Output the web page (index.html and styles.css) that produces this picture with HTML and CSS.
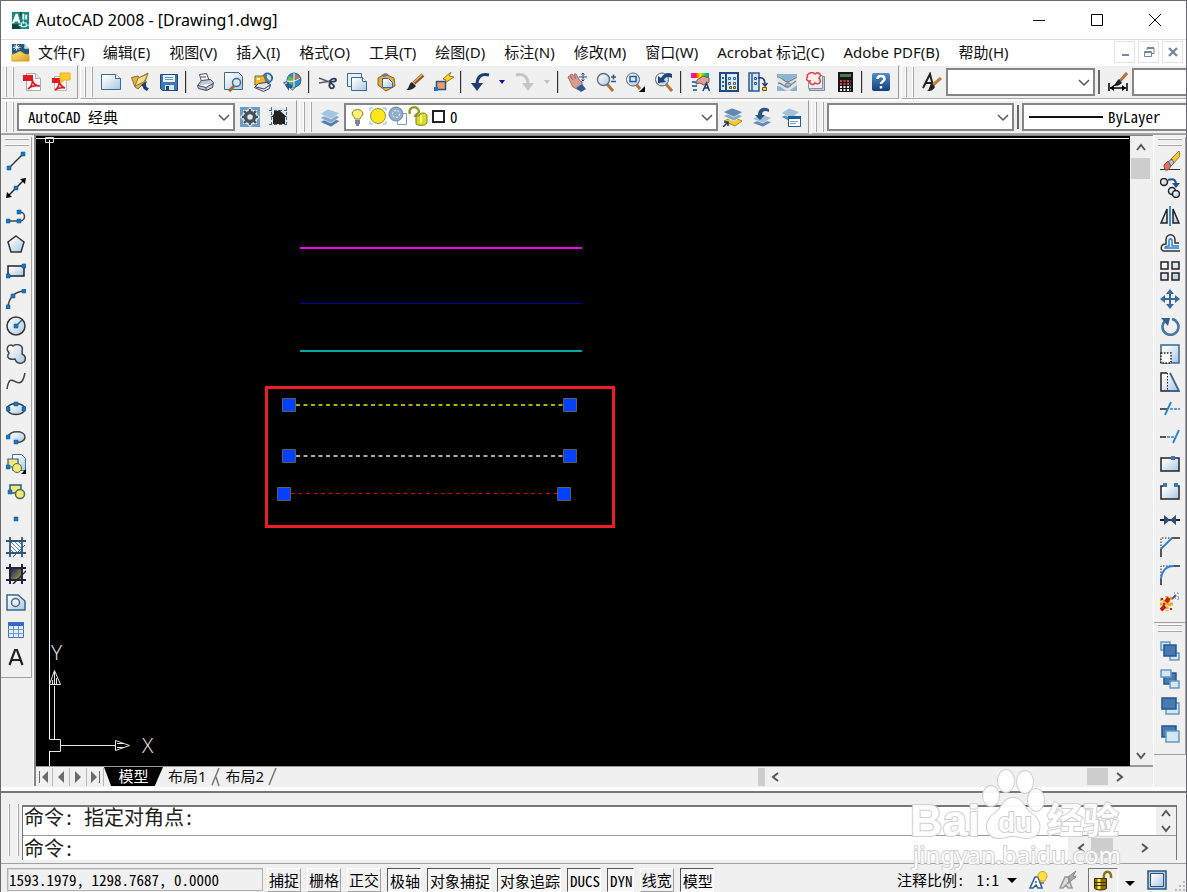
FILE: index.html
```html
<!DOCTYPE html>
<html lang="zh-CN">
<head>
<meta charset="utf-8">
<title>AutoCAD 2008 - [Drawing1.dwg]</title>
<link rel="stylesheet" href="styles.css">
</head>
<body>
<svg class="defs" width="0" height="0" aria-hidden="true">
  <defs>
    <linearGradient id="blue" x1="0" y1="0" x2="1" y2="1"><stop offset="0.1" stop-color="#fff"/><stop offset="1" stop-color="#a9c6e2"/></linearGradient>
    <linearGradient id="deep" x1="0" y1="0" x2="0" y2="1"><stop offset="0" stop-color="#4f8fc8"/><stop offset="1" stop-color="#123f78"/></linearGradient>
    <linearGradient id="gold" x1="0" y1="0" x2="1" y2="1"><stop offset="0" stop-color="#ffe98a"/><stop offset="1" stop-color="#d99a1c"/></linearGradient>
    <linearGradient id="rain" x1="0" x2="1"><stop offset="0" stop-color="#f0f"/><stop offset=".25" stop-color="#f22"/><stop offset=".5" stop-color="#fd0"/><stop offset=".75" stop-color="#2d2"/><stop offset="1" stop-color="#08f"/></linearGradient>
    <linearGradient id="dusk" x1="0" y1="0" x2="1" y2="1"><stop offset=".2" stop-color="#2c3358"/><stop offset="1" stop-color="#b9a93a"/></linearGradient>
  </defs>
</svg>
<div class="window">
  <header class="titlebar">
    <svg class="app" viewBox="0 0 20 20"><path fill="#1d8a80" d="M1 1h18v18H1z"/><path fill="#12403f" d="M1 14h7l2 5H1zM9 1h2v8z"/><path fill="#fff" d="M1 13 5 3h2l3 10H8l-.6-2H4l-.6 2zM12 3h2v6h-2zM15 4h2v5h-2z"/><path fill="none" stroke="#fff" d="M11 12.500h5v4h-5zM13 10v3M8 15h3M16 15h3"/></svg>
    <h1>AutoCAD 2008 - [Drawing1.dwg]</h1>
    <button class="cap" aria-label="最小化"><svg viewBox="0 0 14 14"><path d="M1 7.500h12"/></svg></button>
    <button class="cap" aria-label="最大化"><svg viewBox="0 0 14 14"><path d="M1.500 1.500h11v11h-11z"/></svg></button>
    <button class="cap" aria-label="关闭"><svg viewBox="0 0 14 14"><path d="m1 1 12 12M13 1 1 13"/></svg></button>
  </header>
  <nav class="menubar">
    <svg class="app" viewBox="0 0 20 20"><path fill="#24577e" d="M1 1h13l5 5v6H1z"/><path fill="#cfe4f4" d="M14 1v5h5z"/><path stroke="#fff" d="M6 1v7M2 4.500h8M3.500 2l5 5M8.500 2l-5 5"/><path fill="url(#gold)" stroke="#e0a91c" d="M1 12c4 0 6-3 9-3 3 1 4 4 9 4v6H1z"/></svg>
    <button>文件(F)</button><button>编辑(E)</button><button>视图(V)</button><button>插入(I)</button><button>格式(O)</button><button>工具(T)</button><button>绘图(D)</button><button>标注(N)</button><button>修改(M)</button><button>窗口(W)</button><button>Acrobat 标记(C)</button><button>Adobe PDF(B)</button><button>帮助(H)</button>
    <div class="mdi">
      <button aria-label="最小化图形"><svg viewBox="0 0 14 14"><path stroke-width="2" d="M4 10h7"/></svg></button>
      <button aria-label="还原图形"><svg viewBox="0 0 14 14"><path d="M2.500 6.500h7v5h-7zM5 5V3.500h7v5h-2M2 7.500h8M5 2.500h7"/></svg></button>
      <button aria-label="关闭图形"><svg viewBox="0 0 14 14"><path stroke-width="2.400" d="m3 3 8 8M11 3l-8 8"/></svg></button>
    </div>
  </nav>

  <div class="row">
    <div class="toolbar pdf">
      <i class="grip"></i>
      <button class="tb" aria-label="转换为 PDF"><svg viewBox="0 0 20 20"><path fill="#fff" stroke="#aaa" d="M4.500 1.500h9l5 5v12h-14z"/><path fill="#e8e8e8" stroke="#aaa" d="M13.500 1.500v5h5"/><path fill="#e01b22" d="M1 3h10v6H1z"/><path fill="none" stroke="#e01b22" stroke-width="1.700" d="M6 17c3-2 5-6 4-10 1 5 4 7 8 7-5-1-9 0-12 3z"/></svg></button>
      <button class="tb" aria-label="PDF 注释"><svg viewBox="0 0 20 20"><path fill="#fff" stroke="#bbb" d="M3.500 4.500h12v14h-12z"/><path fill="#e01b22" d="M1 6h8v5H1z"/><path fill="none" stroke="#e01b22" stroke-width="1.700" d="M4 18c3-2 5-6 4-9 1 4 3 6 6 7-4-1-7 0-10 2z"/><path fill="#ffce2e" stroke="#e8b010" d="M10 1h9v7h-6l-3 3V8H9V1z"/></svg></button>
    </div>
    <div class="toolbar">
      <i class="grip"></i>
      <button class="tb" aria-label="新建"><svg viewBox="0 0 20 20"><path fill="url(#blue)" stroke="#3c6a96" d="M.5 2.500h14l5 4v11H.5z"/><path fill="#fff" stroke="#3c6a96" d="M14.500 2.500v4h5"/></svg></button>
      <button class="tb" aria-label="打开"><svg viewBox="0 0 20 20"><path fill="#d9b655" stroke="#8d6e1d" d="M1.500 5.500 8 4l1 2 9-5-3 9-7 7-3-2z"/><path fill="#f5dd92" stroke="#9b7c2c" d="m5 14 3-8 10-4-4 8z"/><path fill="#1d3e70" d="m11 13 6-4-1 3c0 3 1 4 3 4l-2 3c-3-1-4-3-4-4z"/></svg></button>
      <button class="tb" aria-label="保存"><svg viewBox="0 0 20 20"><path fill="#3f79b5" stroke="#1d4980" d="M1.500 2.500h17v16h-15l-2-2z"/><path fill="#e8f1fa" d="M4 3h12v7H4z"/><path stroke="#5e94c4" d="M6 5.500h8M6 7.500h8"/><path fill="#dce6ef" d="M6 13h9v5H6z"/><path fill="#1d4980" d="M7 14h3v4H7z"/></svg></button>
      <i class="sep"></i>
      <button class="tb" aria-label="打印"><svg viewBox="0 0 20 20"><path fill="#fff" stroke="#48506a" d="m6.500 9.500-2-7 7-1 3 8z"/><path fill="#c4c9d8" stroke="#3b435d" d="m2.500 13.500 4-5 9-1 3 3-1 5-6 3-8-2z"/><path fill="#fff" stroke="#3b435d" d="m3 13.500 8 2 7-4M11 16v2M6 5h5"/></svg></button>
      <button class="tb" aria-label="打印预览"><svg viewBox="0 0 20 20"><path fill="url(#blue)" stroke="#3c6a96" d="M.5.500h14l4 4v13H.5z"/><path stroke="#a4672d" stroke-width="3" d="m10 14-5 5"/><circle cx="12.500" cy="10.500" r="4" fill="#d5e8f8" stroke="#4b6680" stroke-width="1.500"/></svg></button>
      <button class="tb" aria-label="发布"><svg viewBox="0 0 20 20"><circle cx="14.500" cy="6" r="5" fill="#3d7ec2" stroke="#1a4d88"/><path fill="#dbedc8" d="M14 2c4 1 5 4 3 7l-3-3z"/><path fill="#f2b92d" stroke="#8c6415" d="M2 4h9l2 6-3 3H2z"/><path fill="#fff" d="M4 6h3v2H4z"/><path fill="#e1e5ed" stroke="#3b435d" d="m1.500 15.500 4-4 8-1 4 2-1 4-6 3z"/><path fill="none" stroke="#3b435d" d="m3 15 8 2 6-4"/></svg></button>
      <button class="tb" aria-label="DWF"><svg viewBox="0 0 20 20"><path fill="#9fb8ce" stroke="#5a7a99" d="m1.500 11 8-4 9 4-8 7z"/><circle cx="12" cy="8" r="7" fill="#318bc4" stroke="#286b91"/><path fill="#77b443" d="M7 4c2 2 5 1 5 4s-2 4-4 4c-3-2-3-5-1-8z"/><path fill="#ef6432" d="M12 2c4 1 6 3 6 6l-5-2z"/><path fill="none" stroke="#fff" d="M5 9c5 1 9 0 13-3M12 1v14"/><path fill="#225b96" d="m3 13 4-3v3h3v3H7v3z"/></svg></button>
      <i class="sep"></i>
      <button class="tb" aria-label="剪切"><svg viewBox="0 0 20 20"><path fill="none" stroke="#59616f" stroke-width="1.500" d="m1 6 13 5M1 11l12-2"/><path fill="none" stroke="#293860" stroke-width="1.800" d="M12 9c2-3 6-3 6-1s-4 2-6 1zM12 11c-2 4 1 6 3 5s1-4-3-5z"/></svg></button>
      <button class="tb" aria-label="复制"><svg viewBox="0 0 20 20"><path fill="#e8f2fb" stroke="#3c6a96" d="M.5 1.500h14v13H.5z"/><path fill="url(#blue)" stroke="#3c6a96" d="M4.500 5.500h11l4 4v9h-15z"/><path fill="#fff" stroke="#3c6a96" d="M15.500 5.500v4h4"/></svg></button>
      <button class="tb" aria-label="粘贴"><svg viewBox="0 0 20 20"><path fill="#d9ac4c" stroke="#846122" d="m2 6 7-4 9 4 1 8-9 5-8-6z"/><path fill="#777" d="m5 3 5-2 3 2-5 2z"/><path fill="url(#blue)" stroke="#3c6a96" d="M6.500 6.500h6l4 4v5l-10 0z"/></svg></button>
      <button class="tb" aria-label="特性匹配"><svg viewBox="0 0 20 20"><path stroke="#8a572a" stroke-width="4" d="m9 11 9-8"/><path stroke="#e8ad64" stroke-width="1.500" d="m9 10 9-8"/><path fill="#292929" d="m7 10 4 4c-3 4-6 4-10 4 4-2 2-6 6-8z"/></svg></button>
      <button class="tb" aria-label="块编辑器"><svg viewBox="0 0 20 20"><path fill="#ffd22e" stroke="#a37a13" d="m17 0-8 7 3 1-4 5 12-8-5-1z"/><path fill="#f39b68" stroke="#275480" stroke-width="1.500" d="M2.500 9.500h9v8h-9z"/><path fill="#1f73be" d="M0 15h4v4H0z"/></svg></button>
      <i class="sep"></i>
      <button class="tb" aria-label="放弃"><svg viewBox="0 0 20 20"><path fill="none" stroke="#1e3c72" stroke-width="3" d="M19 3C11 1 7 5 7 13"/><path fill="#1e3c72" d="M1 11h12l-6 8z"/></svg></button>
      <button class="drop" aria-label="放弃列表"></button>
      <button class="tb" aria-label="重做"><svg viewBox="0 0 20 20"><path fill="none" stroke="#c2c5ca" stroke-width="3" d="M1 3c8-2 12 2 12 10"/><path fill="#c2c5ca" d="M7 11h12l-6 8z"/></svg></button>
      <button class="drop dim" aria-label="重做列表"></button>
      <i class="sep"></i>
      <button class="tb" aria-label="实时平移"><svg viewBox="0 0 20 20"><path fill="#d79c92" stroke="#a86962" d="m1 5 2-1 3 4-3-5 2-1 4 5-2-5 2 0 4 7 2 1v4l-3 4-6-3z"/><path fill="#2c5c92" d="m9 16 6-4 4 5-5 3z"/><path fill="none" stroke="#254f84" d="M16 1v8M12 5h8M14.500 2.500 16 1l1.500 1.500M14.500 7.500 16 9l1.500-1.500"/></svg></button>
      <button class="tb" aria-label="实时缩放"><svg viewBox="0 0 20 20"><path stroke="#b87336" stroke-width="3" d="m11 12 6 7"/><circle cx="7.500" cy="7.500" r="6" fill="url(#blue)" stroke="#5b6e82" stroke-width="1.400"/><path stroke="#275b94" stroke-width="1.500" d="M15 5h5M17.500 2.500v5M15 9.500h5"/></svg></button>
      <button class="tb" aria-label="窗口缩放"><svg viewBox="0 0 20 20"><path stroke="#b87336" stroke-width="3" d="m11 12 4 5"/><circle cx="8" cy="7.500" r="6.500" fill="url(#blue)" stroke="#4e6680"/><path fill="#dff0fe" stroke="#275b94" stroke-width="1.500" d="M5 4.500h6v5H5z"/><path d="M20 14v6h-6z"/></svg></button>
      <button class="tb" aria-label="缩放上一个"><svg viewBox="0 0 20 20"><path stroke="#b87336" stroke-width="3" d="m12 12 6 7"/><circle cx="8" cy="7.500" r="6.500" fill="url(#blue)" stroke="#4e6680"/><path fill="#1f467c" d="M4 11V4l3 2c3-5 7-6 11-4v4c-4-2-7-1-8 2l2 2z"/></svg></button>
      <i class="sep"></i>
      <button class="tb" aria-label="特性"><svg viewBox="0 0 20 20"><path fill="url(#rain)" d="M1 1h18v5H1z"/><path fill="#e0a096" stroke="#865046" d="m7 8 6-4 6 2v4l-5 3-4-2-4 1z"/><path stroke="#4678a8" stroke-width="2" d="M2 10h5M2 14h5M3 18h4"/><path fill="none" stroke="#223c66" stroke-width="1.500" d="m13 19 3.500-8 3 8M14 16h5"/></svg></button>
      <button class="tb" aria-label="设计中心"><svg viewBox="0 0 20 20"><path fill="#deebf8" stroke="#1f4c86" stroke-width="2" d="M1 1h18v18H1zM7 2v17"/><path fill="none" stroke="#2b5c94" stroke-dasharray="2 2" stroke-width="2" d="M3 6h3M3 10h3M3 14h3"/><path fill="#fff" stroke="#2b5c94" d="M9.500 5.500h2v2h-2zM14.500 5.500h2v2h-2zM9.500 10.500h2v2h-2zM14.500 10.500h2v2h-2z"/><path fill="#f1d33a" stroke="#665914" d="M10.500 14.500h2v2h-2zM14.500 14.500h2v2h-2z"/></svg></button>
      <button class="tb" aria-label="工具选项板"><svg viewBox="0 0 20 20"><path fill="#d5e6f6" stroke="#285a92" stroke-width="1.500" d="M1 1h10v18H1zM4 2v17"/><path fill="#fff" stroke="#285a92" d="M6.500 5.500h2v2h-2zM6.500 10.500h2v2h-2z"/><path fill="none" stroke="#1f3e6e" stroke-width="1.500" d="M10 6c5-1 7 1 7 7m-2.500-2 2.500 3 2.500-3"/><path fill="#f1d33a" stroke="#665914" d="M14.500 15.500h4v3h-4z"/></svg></button>
      <button class="tb" aria-label="图纸集管理器"><svg viewBox="0 0 20 20"><path fill="#8ab6d0" d="M0 2h20v17H0z"/><path fill="#dfe4e6" d="M0 4c5-1 6 5 11 5l9-5v9l-8 6c-5 0-7-5-12-5z"/><path fill="none" stroke="#718390" stroke-width="1.300" d="M0 5c5-1 6 5 11 5l9-5M1 11c5 0 6 5 10 4l8-6"/><ellipse cx="11" cy="13" rx="3" ry="2" fill="#a9b6be" stroke="#718390"/></svg></button>
      <button class="tb" aria-label="标记集管理器"><svg viewBox="0 0 20 20"><path fill="#c5ccd4" stroke="#7f8790" d="M5.500 4.500h13v14h-15z"/><path fill="#e8edf2" stroke="#8b949e" d="M2.500 3.500h14v13h-14z"/><path fill="#fff0ef" stroke="#e64750" stroke-width="1.600" d="M4 1c3-2 4 1 5 1 4-3 7 1 4 4 3 4 0 7-4 5-2 3-6 1-5-2-4 1-4-4-2-4-2-1 0-3 2-4z"/></svg></button>
      <button class="tb" aria-label="快速计算器"><svg viewBox="0 0 20 20"><path fill="#171717" d="M3 0h15v20H3z"/><path fill="#4c7d48" d="M5 2h11v3H5z"/><path stroke="#eee" stroke-width="2" stroke-dasharray="2 1.500" d="M5 15h11M5 18h11"/><path stroke="#d54040" stroke-width="2" stroke-dasharray="2 1.500" d="M5 9h11M5 12h11"/></svg></button>
      <i class="sep"></i>
      <button class="tb" aria-label="帮助"><svg viewBox="0 0 20 20"><rect x="1" y="1" width="18" height="18" rx="2" fill="url(#deep)"/><path fill="none" stroke="#fff" stroke-width="2.500" d="M6.500 7c0-4 7-4 7 0 0 2.500-3.500 2.500-3.500 5M10 14v2.500"/></svg></button>
      <i class="end"></i>
    </div>
    <div class="toolbar grow">
      <i class="grip"></i>
      <button class="tb" aria-label="文字样式"><svg viewBox="0 0 20 20"><path fill="none" stroke="#222" stroke-width="2" d="M1 16 8 2l3 12M4 11h7"/><path stroke="#c2803f" stroke-width="3" d="m11 13 8-7"/><path fill="#222" d="m10 11 3 4c-2 4-5 4-8 4 3-2 2-6 5-8z"/></svg></button>
      <span class="combo w-text"><select aria-label="文字样式"><option></option></select><svg viewBox="0 0 12 8"><path d="m1 1 5 5 5-5"/></svg></span>
      <i class="bar"></i>
      <button class="tb" aria-label="标注样式"><svg viewBox="0 0 20 20"><path stroke="#b87336" stroke-width="3" d="m12 9 7-8"/><path fill="#222" d="m11 7 3 4c-3 3-6 3-9 3 3-2 3-5 6-7z"/><path stroke="#000" stroke-width="1.500" d="M1 11v8M19 11v8M2 16h16"/><path d="m2 16 4-3v6zM18 16l-4-3v6z"/></svg></button>
      <span class="combo rest"><select aria-label="标注样式"><option></option></select></span>
    </div>
  </div>

  <div class="row">
    <div class="toolbar">
      <i class="grip"></i>
      <span class="combo w-space mono"><select aria-label="工作空间"><option>AutoCAD 经典</option></select><svg viewBox="0 0 12 8"><path d="m1 1 5 5 5-5"/></svg></span>
      <button class="tb" aria-label="工作空间设置"><svg viewBox="0 0 20 20"><path fill="#6d9cc4" d="M0 0h20v20H0z"/><path fill="#dfe9f1" d="M10 0l3 3 4 0v4l3 3-3 3v4h-4l-3 3-3-3H3v-4l-3-3 3-3V3h4z"/><circle cx="10" cy="10" r="4.500" fill="none" stroke="#4a5058" stroke-width="3.500"/><path stroke="#4a5058" stroke-width="2.400" d="M10 2v3M10 15v3M2 10h3M15 10h3M4 4l3 3M13 13l3 3M16 4l-3 3M7 13l-3 3"/></svg></button>
      <button class="tb" aria-label="我的工作空间"><svg viewBox="0 0 20 20"><path fill="#e4e9ee" d="M1 1h18v18H1z"/><path stroke="#506e8c" stroke-dasharray="3 2" d="M0 3.500h20M0 17.500h20M2.500 0v20M17.500 0v20"/><path fill="#222" d="m2 10 3-3V4h3l2-1 8 7h-2v7H4v-7z"/></svg></button>
      <i class="end"></i>
    </div>
    <div class="toolbar">
      <i class="grip"></i>
      <button class="tb" aria-label="图层特性管理器"><svg viewBox="0 0 20 20"><path fill="#557da5" stroke="#f3f8fc" stroke-width=".6" d="m0 15 10-5 10 4-9 6z"/><path fill="#84a9ca" stroke="#f3f8fc" stroke-width=".6" d="m0 11 10-5 10 4-9 6z"/><path fill="#a6c4dd" stroke="#f3f8fc" stroke-width=".6" d="m0 7 8-5 12 4-9 6z"/></svg></button>
      <span class="combo w-layer mono"><span class="state">
        <svg viewBox="0 0 20 20"><path fill="#fff176" stroke="#8c7a1b" d="M7 13c0-2-3-3-3-6a6 6 0 0 1 11 0c0 3-3 4-3 6z"/><path stroke="#4b5f8a" stroke-width="1.500" d="M7 15h5M7 17h5M8 19h3"/></svg>
        <svg viewBox="0 0 20 20"><path fill="none" stroke="#8fb3c4" d="M2 5V2h3M15 2h3v3M2 15v3h3M15 18h3v-3"/><circle cx="10" cy="10" r="7.500" fill="#ffe81a" stroke="#8d9440"/></svg>
        <svg viewBox="0 0 20 20"><path fill="#fff" stroke="#809db6" d="M9.500 7.500h9v11h-9z"/><circle cx="8" cy="8" r="7" fill="#8fafca" stroke="#6889a6"/><circle cx="8" cy="8" r="3.500" fill="none" stroke="#eef5fb" stroke-dasharray="2 1.500"/></svg>
        <svg viewBox="0 0 20 20"><path fill="none" stroke="#9b9822" stroke-width="2.500" d="M2 8c-3-8 9-9 9-2 0 2-4 2-4 5"/><path fill="#dadb2b" stroke="#827f15" d="M8 10h3c0-4 8-4 8 0v7c-2 3-8 3-11 1z"/><path stroke="#fff78d" stroke-width="2" d="M13 9v8"/></svg>
        <i class="swatch"></i></span><select aria-label="图层"><option>0</option></select><svg class="chev" viewBox="0 0 12 8"><path d="m1 1 5 5 5-5"/></svg></span>
      <button class="tb" aria-label="将对象的图层置为当前"><svg viewBox="0 0 20 20"><path fill="#efca31" stroke="#a88a1e" d="m1 14 9-4 9 4-7 5z"/><path fill="#86aac9" stroke="#fff" stroke-width=".6" d="m0 9 9-4 11 4-9 5z"/><path fill="#5f89b1" stroke="#fff" stroke-width=".6" d="m0 5 9-4 11 4-9 5z"/><path fill="none" stroke="#16345f" stroke-width="1.500" d="m0 20 4-4M1 15h4v4"/></svg></button>
      <button class="tb" aria-label="上一个图层"><svg viewBox="0 0 20 20"><path fill="#628bae" stroke="#fff" stroke-width=".6" d="m0 16 9-4 11 3-9 5z"/><path fill="#a4bed4" stroke="#fff" stroke-width=".6" d="m0 12 9-5 11 4-9 5z"/><path fill="#285681" d="M3 8h3c0-7 6-9 11-6v3c-4-2-7-1-7 3h3l-5 5z"/></svg></button>
      <button class="tb" aria-label="图层状态管理器"><svg viewBox="0 0 20 20"><path fill="#5e8ab1" stroke="#fff" stroke-width=".6" d="m0 10 8-4 11 4-9 5z"/><path fill="#a1c1db" stroke="#fff" stroke-width=".6" d="m0 6 8-5 11 4-9 6z"/><path fill="#fff" stroke="#1d5ca5" d="M7.500 9.500h12v10h-12z"/><path fill="#1d5ca5" d="M7 9h13v3H7z"/><path stroke="#79a2cc" d="M9 14.500h8M9 16.500h6"/></svg></button>
      <i class="end"></i>
    </div>
    <div class="toolbar grow">
      <i class="grip"></i>
      <span class="combo w-color"><select aria-label="颜色"><option></option></select><svg viewBox="0 0 12 8"><path d="m1 1 5 5 5-5"/></svg></span>
      <i class="bar"></i>
      <span class="combo rest w-line mono"><i class="sample"></i><select aria-label="线型"><option>ByLayer</option></select></span>
    </div>
  </div>

  <main class="work">
    <aside class="side">
      <div class="rail draw">
        <i class="hgrip"></i>
        <div class="tools">
          <button aria-label="直线"><svg viewBox="0 0 20 20"><path stroke="#333" stroke-width="1.500" d="M3 17 17 3"/><path class="n" d="M1 15h4v4H1zM15 1h4v4h-4z"/></svg></button>
          <button aria-label="构造线"><svg viewBox="0 0 20 20"><path stroke="#222" stroke-width="1.500" d="M2 18 18 2"/><path d="m0 20 1-6 5 5zM20 0l-6 1 5 5z"/><path class="n" d="M8 8h4v4H8z"/></svg></button>
          <button aria-label="多段线"><svg viewBox="0 0 20 20"><path fill="none" stroke="#444" stroke-width="1.500" d="M2 15h12c6 0 6-9 0-9"/><path class="n" d="M0 13h4v4H0zM11 13h4v4h-4zM11 4h4v4h-4z"/></svg></button>
          <button aria-label="正多边形"><svg viewBox="0 0 20 20"><path fill="url(#blue)" stroke="#333" stroke-width="1.500" d="m10 2 8 6-3 10H5L2 8z"/></svg></button>
          <button aria-label="矩形"><svg viewBox="0 0 20 20"><path fill="url(#blue)" stroke="#222" stroke-width="1.500" d="M2 5h16v10H2z"/><path class="n" d="M0 13h4v4H0zM16 3h4v4h-4z"/></svg></button>
          <button aria-label="圆弧"><svg viewBox="0 0 20 20"><path fill="none" stroke="#444" stroke-width="1.500" d="M2 18C3 8 8 3 18 2"/><path class="n" d="M0 16h4v4H0zM5 5h4v4H5zM16 0h4v4h-4z"/></svg></button>
          <button aria-label="圆"><svg viewBox="0 0 20 20"><circle cx="10" cy="10" r="9" fill="url(#blue)" stroke="#333" stroke-width="1.500"/><path stroke="#2361a4" stroke-width="1.500" d="m10 10 6-6"/><path class="n" d="M8 8h4v4H8z"/></svg></button>
          <button aria-label="修订云线"><svg viewBox="0 0 20 20"><path fill="url(#blue)" stroke="#444" stroke-width="1.500" d="M3 9C-1 4 3-1 7 2c4-3 11-1 9 5 1 1 0 2 0 3 5 2 4 8 0 9-4 1-6-1-7-4-5 1-8-1-7-4 0-1 1-1 1-2z"/></svg></button>
          <button aria-label="样条曲线"><svg viewBox="0 0 20 20"><path fill="none" stroke="#444" stroke-width="1.500" d="M1 18C3 6 6 9 10 11c5 2 7 0 9-9"/></svg></button>
          <button aria-label="椭圆"><svg viewBox="0 0 20 20"><ellipse cx="10" cy="10" rx="9" ry="5.500" fill="url(#blue)" stroke="#333" stroke-width="1.500"/><path class="n" d="M0 8h4v4H0zM8 3h4v4H8zM16 8h4v4h-4z"/></svg></button>
          <button aria-label="椭圆弧"><svg viewBox="0 0 20 20"><path fill="url(#blue)" stroke="#444" stroke-width="1.500" d="M2 10c2-7 17-7 17 0 0 4-5 6-9 5"/><path class="n" d="M0 8h4v4H0zM8 13h4v4H8z"/></svg></button>
          <button aria-label="插入块"><svg viewBox="0 0 20 20"><path fill="url(#blue)" stroke="#3e729e" d="M6.500.500h9l4 4v12h-13z"/><path fill="#f3e77a" stroke="#285a80" stroke-width="1.200" d="M2 5h10v8H2z"/><circle cx="11" cy="14" r="4.500" fill="#f3e77a" stroke="#476a48"/><path class="n" d="M0 11h4v4H0z"/><path d="M20 15v5h-5z"/></svg></button>
          <button aria-label="创建块"><svg viewBox="0 0 20 20"><path fill="#f3e77a" stroke="#285a80" stroke-width="1.500" d="M4 3h11v8H4z"/><circle cx="14" cy="12" r="4.500" fill="#f3e77a" stroke="#476a48" stroke-width="1.500"/><path class="n" d="M2 8h4v4H2z"/></svg></button>
          <button aria-label="点"><svg viewBox="0 0 20 20"><path class="n" d="M8 8h4v4H8z"/></svg></button>
          <button aria-label="图案填充"><svg viewBox="0 0 20 20"><path fill="#fff" d="M4 4h12v12H4z"/><path stroke="#4c83b8" d="m4 4 12 12M8 4l8 8M12 4l4 4M4 8l8 8M4 12l4 4"/><path stroke="#2b587e" stroke-width="1.800" d="M4 0v20M16 0v20M0 4h20M0 16h20"/><path stroke="#2b587e" d="m7 20 12-12"/></svg></button>
          <button aria-label="渐变色"><svg viewBox="0 0 20 20"><path fill="url(#dusk)" d="M4 4h12v12H4z"/><path stroke="#20253c" stroke-width="2" d="M4 0v20M16 0v20M0 4h20M0 16h20"/><path stroke="#20253c" stroke-width="1.500" d="m7 20 13-13"/></svg></button>
          <button aria-label="面域"><svg viewBox="0 0 20 20"><path fill="url(#blue)" stroke="#3a6790" stroke-width="1.500" d="M1 3h11l7 6v9H1z"/><circle cx="9.500" cy="10.500" r="4" fill="#e8f1fb" stroke="#4b6680" stroke-width="1.500"/></svg></button>
          <button aria-label="表格"><svg viewBox="0 0 20 20"><path fill="#e8f1fb" stroke="#4673b5" d="M2.500 2.500h15v15h-15z"/><path fill="#3969c7" d="M2 2h16v4H2z"/><path stroke="#6c95ce" d="M2 9.500h16M2 13.500h16M7.500 6v12M12.500 6v12"/></svg></button>
          <button aria-label="多行文字"><svg viewBox="0 0 20 20"><path fill="none" stroke="#222" stroke-width="2.200" d="M3.500 18 9 3h2l5.500 15M6 13h8"/></svg></button>
        </div>
      </div>
    </aside>

    <section class="doc">
      <div class="canvas">
        <svg class="drawing" role="img" aria-label="图形">
          <path stroke="#fff" stroke-width="1" d="M13.500 4v628"/>
          <path stroke="#f0f0f0" stroke-width="1" d="M0 2.500h1093"/>
          <path fill="none" stroke="#ddd" d="M9.500 1.500h8v5h-8z"/>
          <path stroke="#f000f0" stroke-width="2" d="M264 112h282"/>
          <path stroke="#0000b0" stroke-width="1" d="M264 167.500h282"/>
          <path stroke="#00a8a8" stroke-width="2" d="M264 215h282"/>
          <g stroke-width="2" stroke-dasharray="4 3.500"><path stroke="#b0ac00" d="M260 269h267"/><path stroke="#a8a8a8" d="M260 320h267"/></g>
          <path stroke="#e00000" stroke-dasharray="4 3.500" d="M255 357.500h267"/>
          <g fill="#0440ff" stroke="#5c5c60"><path d="M246.500 262.500h13v13h-13zM527.500 262.500h13v13h-13zM246.500 313.500h13v13h-13zM527.500 313.500h13v13h-13zM241.500 351.500h13v13h-13zM521.500 351.500h13v13h-13z"/></g>
          <path fill="none" stroke="#ee1c25" stroke-width="3" d="M230.500 251.500h347v139h-347z"/>
        </svg>
        <svg class="ucs" viewBox="0 0 130 130" role="img" aria-label="坐标系">
          <path fill="#000" d="M13 103h11v12H13z"/>
          <path fill="none" stroke="#e6e6e6" d="M13.500 103.500h11v12h-11M18.500 103V50M25 109.500h54M13.500 48.500h11l-6-14zM18.500 36v12M79.500 104.500v10l14-5zM81 107.500h7M81 111.500h7M16.500 44v4M20.500 42v6"/>
          <text x="15" y="24">Y</text><text x="106" y="117">X</text>
        </svg>
      </div>
      <div class="vscroll"><button aria-label="向上"><svg viewBox="0 0 12 12"><path d="m2 8 4-5 4 5"/></svg></button><i class="thumb"></i><button aria-label="向下"><svg viewBox="0 0 12 12"><path d="m2 4 4 5 4-5"/></svg></button></div>
      <div class="tabs">
        <button class="nav" aria-label="第一个"><svg viewBox="0 0 12 12"><path d="M1 0h1v12H1zM10 0v12L4 6z"/></svg></button>
        <button class="nav" aria-label="上一个"><svg viewBox="0 0 12 12"><path d="M9 0v12L3 6z"/></svg></button>
        <button class="nav" aria-label="下一个"><svg viewBox="0 0 12 12"><path d="M3 0v12l6-6z"/></svg></button>
        <button class="nav" aria-label="最后一个"><svg viewBox="0 0 12 12"><path d="M10 0h1v12h-1zM2 0v12l6-6z"/></svg></button>
        <button class="tab on">模型</button>
        <button class="tab">布局1</button>
        <svg class="slash" viewBox="0 0 9 18"><path d="M8 0 1 17M5 9l3 9"/></svg>
        <button class="tab">布局2</button>
        <svg class="slash" viewBox="0 0 9 18"><path d="M8 0 1 17"/></svg>
        <i class="split"></i>
        <div class="hscroll"><button aria-label="向左"><svg viewBox="0 0 12 12"><path d="M8 2 3 6l5 4"/></svg></button><i class="thumb"></i><button aria-label="向右"><svg viewBox="0 0 12 12"><path d="m4 2 5 4-5 4"/></svg></button></div>
      </div>
    </section>

    <aside class="side right">
      <div class="rail modify">
        <i class="hgrip"></i>
        <div class="tools">
          <button aria-label="删除"><svg viewBox="0 0 20 20"><path stroke="#333" d="M0 18.500h20"/><path fill="#f3c63e" stroke="#a47923" d="m10 9 9-9 1 5-7 8z"/><path fill="#b4c9d8" stroke="#587184" d="m8 11 4-3 2 4-3 3z"/><path fill="#dc7563" stroke="#8f4036" d="m4 14 4-4 3 5-3 4H5z"/></svg></button>
          <button aria-label="复制对象"><svg viewBox="0 0 20 20"><circle cx="4" cy="4" r="3.500" class="o"/><circle cx="12" cy="13" r="3.500" class="o"/><circle cx="16" cy="16" r="3.500" class="o"/><path fill="none" stroke="#1f538b" stroke-width="2" d="M8 2c6-2 8 0 8 5"/><path fill="#1f538b" d="m12 5 8 0-4 5z"/></svg></button>
          <button aria-label="镜像"><svg viewBox="0 0 20 20"><path class="o" d="M7 3v14H1zM13 3v14h6z"/><path stroke="#2a80dd" stroke-width="1.800" d="M10 0v20"/></svg></button>
          <button aria-label="偏移"><svg viewBox="0 0 20 20"><path fill="none" stroke="#333" stroke-width="1.500" d="M20 17H4c-4 0-4-7 2-7V6c0-7 9-7 9 0v3h4"/><path fill="none" stroke="#2b80d8" stroke-width="1.500" d="M19 14H5c0-2 2-2 4-2V7c0-3 3-3 3 0v5h7"/></svg></button>
          <button aria-label="阵列"><svg viewBox="0 0 20 20"><path class="o" d="M1 1h7v7H1zM12 1h7v7h-7zM1 12h7v7H1zM12 12h7v7h-7z"/></svg></button>
          <button aria-label="移动"><svg viewBox="0 0 20 20"><path stroke="#3a6ba0" stroke-width="2" d="M10 2v16M2 10h16"/><path fill="#3a6ba0" d="m10 0 4 5H6zM10 20l4-5H6zM0 10l5-4v8zM20 10l-5-4v8z"/></svg></button>
          <button aria-label="旋转"><svg viewBox="0 0 20 20"><path fill="none" stroke="#4a76a4" stroke-width="2.600" d="M12 3a8 8 0 1 1-7 2"/><path fill="#355f90" d="M1 2h9l-2 8z"/></svg></button>
          <button aria-label="缩放"><svg viewBox="0 0 20 20"><path fill="url(#blue)" stroke="#3a6790" stroke-width="1.500" d="M1 1h18v18H1z"/><path fill="#fff" stroke="#222" stroke-width="1.500" stroke-dasharray="1.500 1.500" d="M1 9h10v10H1z"/></svg></button>
          <button aria-label="拉伸"><svg viewBox="0 0 20 20"><path fill="url(#blue)" d="M2 1h8l9 18H2z"/><path fill="none" stroke="#222" stroke-width="1.500" d="M7 1H1v18h9"/><path fill="none" stroke="#3a6790" stroke-width="1.800" d="m10 1 9 18h-9"/><path stroke="#222" stroke-dasharray="1.500 1.500" d="M7.500 1v18"/></svg></button>
          <button aria-label="修剪"><svg viewBox="0 0 20 20"><path stroke="#222" stroke-width="1.500" d="M0 10h7"/><path stroke="#2b80d8" stroke-width="1.500" stroke-dasharray="3 1" d="M10 10h10"/><path stroke="#2b80d8" stroke-width="1.800" d="m5 16 6-13"/></svg></button>
          <button aria-label="延伸"><svg viewBox="0 0 20 20"><path stroke="#222" stroke-width="1.500" d="M0 10h6"/><path stroke="#2b80d8" stroke-width="1.500" stroke-dasharray="3 1" d="M7 10h7"/><path stroke="#2b80d8" stroke-width="1.800" d="m13 16 6-13"/></svg></button>
          <button aria-label="打断于点"><svg viewBox="0 0 20 20"><path class="o" d="M1 4h18v13H1z"/><path fill="#3b78b5" d="M11 2h4v4h-4z"/></svg></button>
          <button aria-label="打断"><svg viewBox="0 0 20 20"><path fill="url(#blue)" d="M2 4h16v13H2z"/><path fill="none" stroke="#222" stroke-width="1.500" d="M4 4H1v13h18V4h-3"/><path fill="#3b78b5" d="M3 1h4v4H3zM14 1h4v4h-4z"/></svg></button>
          <button aria-label="合并"><svg viewBox="0 0 20 20"><path stroke="#222" stroke-width="2" d="M0 10h20"/><path fill="#264f79" d="m4 5 6 5-6 5zM16 5l-6 5 6 5z"/></svg></button>
          <button aria-label="倒角"><svg viewBox="0 0 20 20"><path stroke="#222" stroke-width="1.500" d="M1 12v8M12 1h8"/><path fill="none" stroke="#222" stroke-dasharray="1.500 1.500" d="M1 12V1h11"/><path stroke="#2b80d8" stroke-width="1.800" d="M1 12 12 1"/></svg></button>
          <button aria-label="圆角"><svg viewBox="0 0 20 20"><path stroke="#222" stroke-width="1.500" d="M1 14v6M14 1h6"/><path fill="none" stroke="#222" stroke-dasharray="1.500 1.500" d="M1 14V1h13"/><path fill="none" stroke="#2b80d8" stroke-width="1.800" d="M1 14C2 5 6 1 14 1"/></svg></button>
          <button aria-label="分解"><svg viewBox="0 0 20 20"><path fill="none" stroke="#edaa1d" stroke-width="3" stroke-dasharray="2.500 1" d="m0 7 12 7M7 4v15M1 18 12 5M0 12h13"/><path stroke="#c41d20" stroke-width="4" d="m1 18 4-4M6 10l3-4"/><path stroke="#c41d20" stroke-width="2" stroke-dasharray="2 2" d="M1 7h3M10 17h3M4 11v3"/><path stroke="#555f6c" stroke-width="2" d="m12 7 4-4"/><path stroke="#7994b1" stroke-dasharray="1 2" stroke-width="1.500" d="M14 1h6M18 1v8M15 6h5"/></svg></button>
        </div>
      </div>
      <div class="rail order">
        <i class="hgrip"></i>
        <div class="tools">
          <button aria-label="前置"><svg viewBox="0 0 20 20"><path class="l" d="M1 1h9v8H1zM10 12h9v7h-9z"/><path class="d" d="M4 4h12v11H4z"/></svg></button>
          <button aria-label="后置"><svg viewBox="0 0 20 20"><path class="d" d="M4 4h12v11H4z"/><path class="l" d="M1 1h10v7H1zM10 12h9v7h-9z"/></svg></button>
          <button aria-label="置于对象之上"><svg viewBox="0 0 20 20"><path class="l" d="M6 7h13v11H6z"/><path class="d" d="M2 2h14v11H2z"/></svg></button>
          <button aria-label="置于对象之下"><svg viewBox="0 0 20 20"><path class="d" d="M2 2h14v11H2z"/><path class="l" d="M6 7h13v11H6z"/></svg></button>
        </div>
      </div>
    </aside>
  </main>

  <section class="command">
    <i class="grip"></i>
    <div class="console">
      <div class="history"><p>命令: 指定对角点:</p><div class="mini"><svg viewBox="0 0 12 12"><path d="m2 8 4-5 4 5"/></svg><svg viewBox="0 0 12 12"><path d="m2 4 4 5 4-5"/></svg></div></div>
      <div class="prompt"><label for="cmd">命令:</label><input id="cmd" type="text"><div class="hbar"><svg viewBox="0 0 12 12"><path d="M8 2 3 6l5 4"/></svg><i class="thumb"></i><svg viewBox="0 0 12 12"><path d="m4 2 5 4-5 4"/></svg></div></div>
    </div>
  </section>

  <footer class="status">
    <output class="coords">1593.1979, 1298.7687, 0.0000</output>
    <div class="toggles"><button>捕捉</button><button>栅格</button><button>正交</button><button class="in">极轴</button><button class="in">对象捕捉</button><button class="in">对象追踪</button><button class="in">DUCS</button><button class="in">DYN</button><button>线宽</button><button class="in">模型</button></div>
    <div class="tray">
      <span>注释比例:</span>
      <button class="scale">1:1<i class="tri"></i></button>
      <button class="ti" aria-label="注释可见性"><svg viewBox="0 0 20 20"><path fill="#fff" stroke="#2d6199" stroke-width="1.600" d="M2 18 7 7l3 0 4 11h-4l-2-3-3 3zM7 12h2"/><path fill="#ffe045" stroke="#cf9d16" d="M12 11c0-2-2-3-2-5a4.500 4.500 0 0 1 9 0c0 2-2 3-2 5z"/><path stroke="#666" stroke-width="1.500" d="M13 13h3"/></svg></button>
      <button class="ti" aria-label="自动缩放"><svg viewBox="0 0 20 20"><path fill="#ddd" stroke="#999" stroke-width="1.600" d="M2 18 7 7l3 0 4 11h-4l-2-3-3 3z"/><path fill="#aaa" stroke="#888" d="m18 1-8 6 2 2-3 5 9-7-3-1z"/></svg></button>
      <button class="lock" aria-label="锁定"><svg viewBox="0 0 22 22"><path fill="none" stroke="#8b7412" stroke-width="2.500" d="M12 10c-2-9 8-10 7-1"/><path fill="#8c6f0c" stroke="#3c3005" d="M2.500 9.500h12v10c-3 2-9 2-12 0z"/><path stroke="#ffe848" stroke-width="3" d="M7 10v10"/><path stroke="#3c3005" d="M2 13.500h13M2 16.500h13"/></svg></button>
      <button class="more" aria-label="状态栏菜单"><i class="tri"></i></button>
      <button class="ti" aria-label="全屏显示"><svg viewBox="0 0 20 20"><path fill="#b5cbe0" stroke="#2b547f" stroke-width="1.500" d="M1 1h18v18H1z"/><path fill="url(#blue)" stroke="#23578c" d="M3.500 3.500h13v13h-13z"/></svg></button>
      <svg class="size" viewBox="0 0 11 11"><path d="M8 0h2v2H8zM4 4h2v2H4zM8 4h2v2H8zM0 8h2v2H0zM4 8h2v2H4zM8 8h2v2H8z"/></svg>
    </div>
  </footer>
  <svg class="mark" viewBox="0 0 230 105" aria-hidden="true">
    <g class="paw"><ellipse cx="87" cy="31" rx="8" ry="10"/><ellipse cx="102" cy="16" rx="8" ry="11"/><ellipse cx="121" cy="17" rx="8" ry="11"/><ellipse cx="132" cy="35" rx="8" ry="11"/><path d="M109 33c10 0 10 10 19 16 12 8 9 24-5 24-6 0-8-2-14-2s-8 2-14 2c-14 0-16-16-5-24 9-6 9-16 19-16z"/></g>
    <text class="big" x="6" y="71">Bai</text><text class="du" x="94" y="67">du</text><text class="cn" x="143" y="69">经验</text><text class="url" x="9" y="99">jingyan.baidu.com</text>
  </svg>
</div>
</body>
</html>
```

FILE: styles.css
```css
* { box-sizing: border-box; }
body { margin: 0; font-family: "Noto Sans", "Noto Sans CJK SC", sans-serif; color: #111; }
button { margin: 0; padding: 0; border: 0; background: none; font: inherit; color: inherit; display: flex; align-items: center; justify-content: center; flex: none; white-space: nowrap; }
svg { display: block; flex: none; }
i { flex: none; display: block; }
.defs { position: absolute; }
.mono, .coords, .toggles, .tray, .command { font-family: "Noto Sans Mono CJK SC", "Liberation Mono", "Noto Sans CJK SC", monospace; }
.window { position: relative; height: 100vh; display: flex; flex-direction: column; background: #f0f0f0; border: 1px solid #6a6a6c; border-bottom: 0; overflow: hidden; }

.titlebar { height: 38px; display: flex; align-items: center; background: #fff; padding-left: 10px; }
.titlebar h1 { flex: 1; margin: 0 0 0 6px; font-size: 16px; font-weight: 400; line-height: 24px; color: #000; }
.app { width: 19px; height: 19px; }
.cap { width: 58px; height: 38px; }
.cap:last-child { margin-right: 2px; }
.cap svg { width: 14px; height: 14px; fill: none; stroke: #000; }
.menubar { height: 25px; display: flex; align-items: center; background: #fff; border-top: 1px solid #dcdcdc; padding: 0 3px 0 10px; font-size: 15px; line-height: 22px; }
.menubar > button { padding: 0 10px 0 9px; }
.menubar > button:first-of-type { padding: 0 9px 0 8px; }
.mdi { margin-left: auto; display: flex; gap: 3px; }
.mdi button { width: 21px; height: 22px; border: 1px solid #e4e4e4; }
.mdi svg { width: 14px; height: 14px; fill: none; stroke: #75879c; stroke-width: 1; }

.row { height: 35px; display: flex; gap: 2px; border-top: 1px solid #fff; }
.toolbar { display: flex; align-items: center; border-right: 1px solid #9c9c9c; border-bottom: 1px solid #a8a8a8; border-top: 1px solid #fff; border-left: 1px solid #fff; padding-left: 4px; flex: none; }
.toolbar.grow { flex: 1; min-width: 0; overflow: hidden; border-right: 0; }
.toolbar.pdf { padding-right: 2px; }
.grip { width: 8px; height: 30px; margin-right: 3px; border: solid #a6a6a6; border-width: 0 1px; box-shadow: inset 1px 0 #f0f0f0, inset -1px 0 #fff, -1px 0 #fff; }
.tb { width: 29px; height: 30px; }
.tb svg { width: 20px; height: 20px; }
.sep { width: 2px; height: 22px; margin: 0 3px 0 2px; background: #333; border-right: 1px solid #ccc; }
.bar { width: 2px; height: 24px; margin: 0 3px; background: #666; }
.end { width: 3px; }
.drop { width: 16px; height: 30px; }
.drop::after { content: ""; border: 3px solid transparent; border-top: 4px solid #14148c; border-bottom: 0; }
.drop.dim::after { border-top-color: #c0c0c0; }
.combo { position: relative; height: 28px; display: flex; flex: none; }
.combo select { width: 100%; height: 28px; appearance: none; background: #fff; border: 2px solid #858585; border-radius: 0; padding: 0 9px; font: inherit; font-size: 15px; line-height: 24px; color: #000; }
.combo > svg { position: absolute; right: 5px; top: 11px; width: 12px; height: 8px; fill: none; stroke: #555; stroke-width: 1.500; pointer-events: none; }
.w-text { width: 149px; }
.w-space { width: 218px; }
.w-layer { width: 374px; }
.w-color { width: 187px; }
.combo.rest { flex: 1; margin-right: -4px; min-width: 0; }
.w-layer select { padding-left: 104px; }
.state { position: absolute; left: 4px; top: 3px; display: flex; align-items: center; height: 20px; }
.state svg { width: 20px; height: 20px; }
.swatch { width: 13px; height: 13px; border: 2px solid #222; background: #fff; margin-left: 4px; }
.w-line select { padding-left: 84px; }
.sample { position: absolute; left: 7px; top: 13px; width: 74px; height: 2px; background: #111; }

.work { flex: 1; min-height: 0; display: flex; border-top: 1px solid #a0a0a0; }
.side { width: 33px; flex: none; padding-top: 2px; border-right: 1px solid #fff; }
.rail { padding-top: 2px; border: solid #a0a0a0; border-width: 0 1px 1px 0; width: 31px; display: flex; flex-direction: column; }
.hgrip { width: 24px; height: 7px; margin: 0 0 1px 4px; border: solid #a6a6a6; border-width: 1px 0; box-shadow: inset 0 -1px #fff, 0 -1px #fff; }
.tools { flex: 1; display: flex; flex-direction: column; padding-bottom: 6px; }
.tools button { flex: 1; min-height: 0; }
.tools svg { width: 20px; height: 20px; }
.draw { height: 541px; }
.modify { height: 486px; }
.order { height: 132px; }
.order .hgrip { margin-bottom: 5px; }
.n { fill: #1878c8; stroke: #0b528f; stroke-width: .5; }
.o { fill: url(#blue); stroke: #222; stroke-width: 1.500; }
.l { fill: #d3e7ef; stroke: #6598c6; stroke-width: 1.500; }
.d { fill: #4879b0; stroke: #23578f; stroke-width: 1.500; }
.right { width: 33px; border: 0; border-left: 1px solid #fff; }
.right .rail { width: 32px; }

.doc { flex: 1; min-width: 0; display: grid; grid-template-columns: 1fr 23px; grid-template-rows: 1fr 20px; margin-bottom: 5px; border: solid #858585; border-width: 1px 0 0 2px; }
.canvas { position: relative; background: #000; overflow: hidden; min-height: 0; }
.drawing { position: absolute; left: 0; top: 0; width: 100%; height: 100%; }
.ucs { position: absolute; left: 0; bottom: 0; width: 130px; height: 130px; }
.ucs text { fill: #e6e6e6; font-family: "Open Sans", sans-serif; font-weight: 300; font-size: 21px; }
.vscroll { display: flex; flex-direction: column; align-items: flex-start; padding: 1px 0 0 1px; background: #f0f0f0; border-bottom: 1px solid #999; min-height: 0; }
.vscroll button:last-child { margin-top: auto; }
.vscroll button { width: 20px; height: 21px; }
.vscroll svg, .hscroll svg, .mini svg, .hbar svg { width: 12px; height: 12px; fill: none; stroke: #555; stroke-width: 2; }
.thumb { background: #cdcdcd; }
.vscroll .thumb { width: 19px; height: 21px; }
.tabs { grid-column: 1 / -1; display: flex; align-items: center; border-top: 1px solid #999; font-size: 15px; line-height: 18px; min-width: 0; }
.nav { width: 17px; height: 18px; border-right: 1px solid #b8b8b8; }
.nav svg { width: 12px; height: 12px; fill: #6b6b6b; }
.tab { height: 19px; padding: 0 4px 2px 3px; }
.tab.on { width: 59px; padding: 0 0 2px; background: #000; color: #fff; clip-path: polygon(0 0, 100% 0, 86% 100%, 12% 100%); margin-right: 2px; }
.slash { width: 9px; height: 18px; margin-right: 3px; fill: none; stroke: #777; stroke-width: 1.500; }
.split { width: 7px; height: 18px; background: #cdcdcd; margin-left: auto; }
.hscroll { width: 388px; display: flex; align-items: center; padding-right: 23px; }
.hscroll button { width: 22px; height: 18px; }
.hscroll .thumb { width: 21px; height: 17px; margin-left: auto; }

.command { height: 72px; flex: none; display: flex; align-items: flex-start; padding: 11px 9px 0 8px; border-top: 2px solid #777; box-shadow: 0 -4px #fff; }
.command .grip { height: 52px; width: 10px; }
.console { flex: 1; min-width: 0; margin-top: 1px; border: solid #777; border-width: 2px 1px 0 1px; background: #fff; font-size: 20px; line-height: 20px; color: #222; }
.history { height: 29px; display: flex; border-bottom: 1px solid #999; }
.history p { flex: 1; margin: 0; padding-left: 1px; }
.mini { width: 20px; background: #f0f0f0; display: flex; flex-direction: column; align-items: center; justify-content: space-around; }
.prompt { height: 24px; display: flex; }
.prompt label { padding: 2px 0 0 1px; }
.prompt input { flex: 1; min-width: 0; border: 0; padding: 0; font: inherit; outline: 0; }
.hbar { width: 108px; background: #f0f0f0; display: flex; align-items: center; padding: 0 26px 0 8px; }
.hbar .thumb { width: 22px; height: 20px; margin: 0 auto 0 3px; }

.status { height: 29px; flex: none; display: flex; align-items: flex-start; padding: 4px 0 0 6px; border-top: 1px solid #a0a0a0; font-size: 15px; line-height: 22px; color: #000; }
.coords { width: 256px; height: 23px; padding-left: 1px; border: 1px solid #b0b0b0; box-shadow: inset 1px 1px #d8d8d8; }
.toggles { display: flex; gap: 6px; margin-left: 4px; }
.toggles button { height: 24px; padding: 0 1px; border: 1px solid; border-color: #fff #a0a0a0 #a0a0a0 #fff; }
.toggles .in { border-color: #555 #fff #fff #555; padding: 2px 0 0 2px; background: #f6f6f6; }
.tray { margin-left: auto; display: flex; align-items: center; height: 24px; }
.scale { gap: 8px; margin: 0 6px 0 12px; }
.tri { border: 5px solid transparent; border-top-color: #000; border-bottom: 0; }
.ti { width: 30px; height: 24px; }
.ti svg { width: 20px; height: 20px; }
.lock { width: 30px; height: 25px; margin-left: 5px; border: 1px solid; border-color: #777 #fff #fff #777; }
.lock svg { width: 22px; height: 22px; }
.more { width: 24px; height: 24px; padding-top: 6px; }
.size { width: 11px; height: 11px; margin-left: 3px; align-self: flex-end; fill: #b8b8b8; }

.mark { position: absolute; right: 52px; bottom: 22px; width: 230px; height: 105px; pointer-events: none; }
.mark text, .paw { fill: #fff; fill-opacity: .95; stroke: #d0d0d0; stroke-width: 2; paint-order: stroke; font-family: "Liberation Sans", "Noto Sans CJK SC", sans-serif; }
.mark .big { font-size: 45px; font-weight: 700; }
.mark .du { font-size: 28px; font-weight: 700; }
.mark .cn { font-size: 36px; font-weight: 700; }
.mark .url { font-size: 24px; font-family: "Noto Sans", sans-serif; }
```
